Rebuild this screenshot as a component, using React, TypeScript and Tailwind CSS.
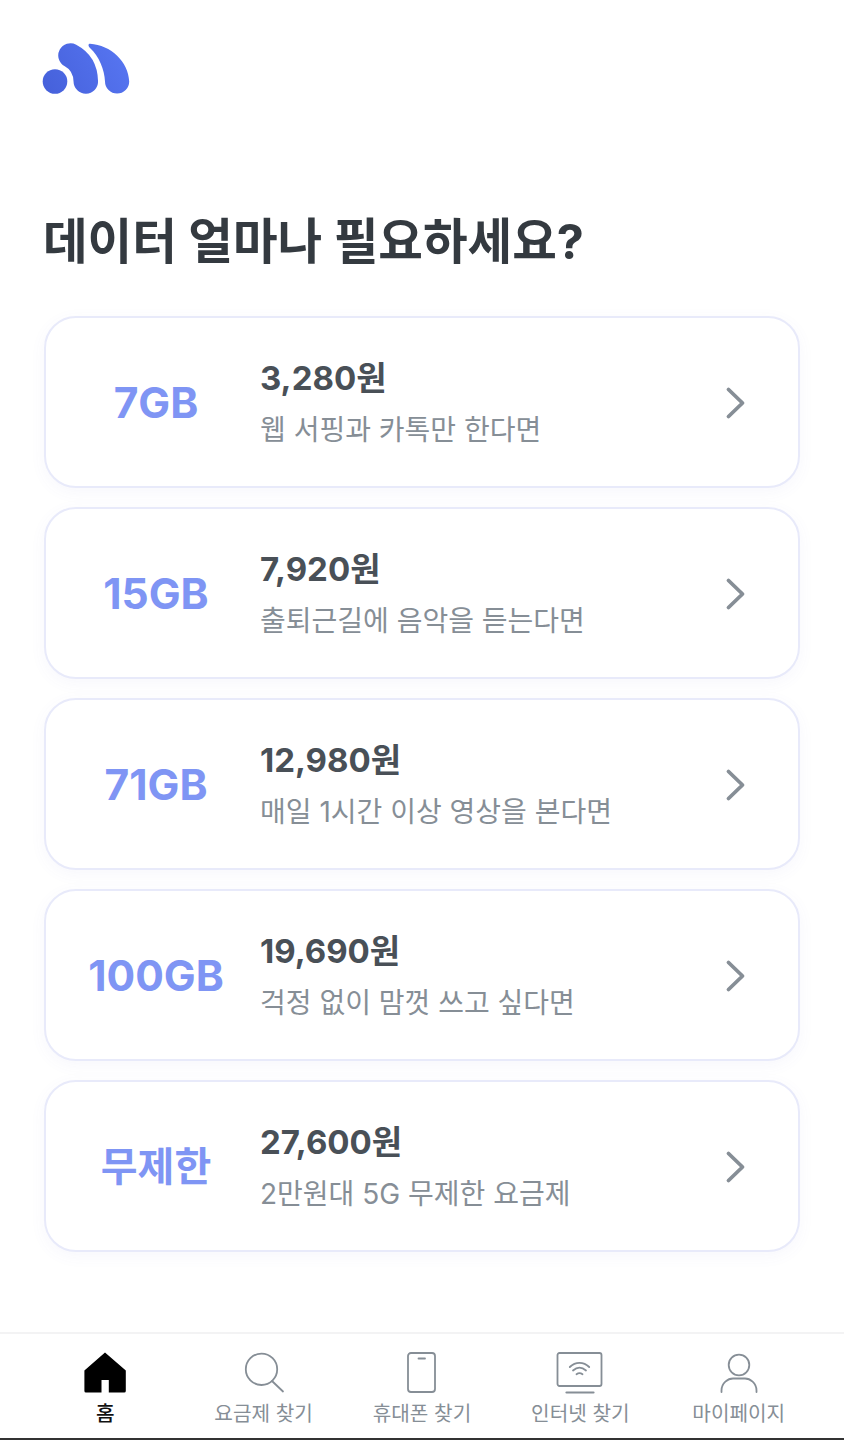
const font = { fontFamily: '"Inter", "Noto Sans CJK KR", sans-serif' };

const plans = [
  { gb: "7GB", price: "3,280원", desc: "웹 서핑과 카톡만 한다면" },
  { gb: "15GB", price: "7,920원", desc: "출퇴근길에 음악을 듣는다면" },
  { gb: "71GB", price: "12,980원", desc: "매일 1시간 이상 영상을 본다면" },
  { gb: "100GB", price: "19,690원", desc: "걱정 없이 맘껏 쓰고 싶다면" },
  { gb: "무제한", price: "27,600원", desc: "2만원대 5G 무제한 요금제", small: true },
];

function Logo() {
  return (
    <svg width="88" height="52" viewBox="42 43 88 52" className="block">
      <defs>
        <linearGradient id="lg2" gradientUnits="userSpaceOnUse" x1="43" y1="94" x2="130" y2="44">
          <stop offset="0" stopColor="#4560da" />
          <stop offset="1" stopColor="#5877f3" />
        </linearGradient>
      </defs>
      <circle cx="55" cy="81.5" r="12.3" fill="url(#lg2)" />
      <path d="M70.5 55.5C79 60 85.5 68 85.8 81.5" fill="none" stroke="url(#lg2)" strokeWidth="24.5" strokeLinecap="round" />
      <path d="M90 43.8C111 45 128.5 62 129.2 81.5A12.1 12.1 0 0 1 105 81.5C104.6 70 99 56 90 48C88 46.2 88 43.8 90 43.8Z" fill="url(#lg2)" />
    </svg>
  );
}

function Chevron() {
  return (
    <svg width="22" height="34" viewBox="0 0 22 34" fill="none" className="mt-[2px] block">
      <path d="M3.5 3.5L17.5 17L3.5 30.5" stroke="#868e96" strokeWidth="3.8" strokeLinecap="round" strokeLinejoin="round" />
    </svg>
  );
}

function HomeIcon() {
  return (
    <svg width="44" height="42" viewBox="0 0 44 42" className="block">
      <path d="M22 .6L42.8 18.5V39A1.6 1.6 0 0 1 41.2 40.6H25.8V28H18.5V40.6H3A1.6 1.6 0 0 1 1.4 39V18.5Z" fill="#000" />
    </svg>
  );
}

function SearchIcon() {
  return (
    <svg width="44" height="42" viewBox="0 0 44 42" fill="none" stroke="#868e96" strokeWidth="1.8" strokeLinecap="round" className="block">
      <circle cx="19.5" cy="17.3" r="15.7" />
      <path d="M30 29L41 39.5" />
    </svg>
  );
}

function PhoneIcon() {
  return (
    <svg width="44" height="42" viewBox="0 0 44 42" fill="none" stroke="#868e96" strokeWidth="1.8" strokeLinecap="round" className="block">
      <rect x="8" y="1" width="27" height="39" rx="3" />
      <path d="M18.5 6.5H25" />
    </svg>
  );
}

function InternetIcon() {
  return (
    <svg width="48" height="42" viewBox="0 0 48 42" fill="none" stroke="#868e96" strokeWidth="1.8" strokeLinecap="round" className="block">
      <rect x="1.5" y="1" width="44" height="33" rx="2" />
      <path d="M10.5 40.5H37.5" strokeWidth="2.2" />
      <path d="M13.8 15C19.5 9.4 27.5 9.4 33.2 15" />
      <path d="M17 18.5C21.2 14.8 25.8 14.8 30 18.5" />
      <path d="M20.5 22.2C22.5 20.8 24.5 20.8 26.5 22.2" />
    </svg>
  );
}

function PersonIcon() {
  return (
    <svg width="44" height="42" viewBox="0 0 44 42" fill="none" stroke="#868e96" strokeWidth="1.8" strokeLinecap="round" className="block">
      <circle cx="22" cy="13" r="10.3" />
      <path d="M4.5 40V38.5C4.5 31 11 26.5 16 26.5H28C33 26.5 39.5 31 39.5 38.5V40" />
    </svg>
  );
}

const tabs = [
  { label: "홈", icon: <HomeIcon />, active: true },
  { label: "요금제 찾기", icon: <SearchIcon /> },
  { label: "휴대폰 찾기", icon: <PhoneIcon /> },
  { label: "인터넷 찾기", icon: <InternetIcon /> },
  { label: "마이페이지", icon: <PersonIcon /> },
];

export default function App() {
  return (
    <div style={font} className="flex h-[1440px] w-[844px] flex-col overflow-hidden bg-white">
      <main className="flex-1 px-[44px]">
        <div className="pt-[43px]">
          <div className="-ml-[2px]">
            <Logo />
          </div>
        </div>
        <h1 className="mt-[115px] -ml-[1px] h-[64px] text-[48.5px] leading-[64px] font-bold whitespace-nowrap text-[#343a40]">
          데이터 얼마나 필요하세요?
        </h1>
        <div className="mt-[42px] flex flex-col gap-[19px]">
          {plans.map((p) => (
            <div
              key={p.gb}
              className="flex h-[172px] items-center rounded-[32px] border-2 border-[#e8eafa] bg-white pr-[51px] shadow-[0_4px_16px_rgba(90,100,200,0.05)]"
            >
              <div className={`-mr-[6px] w-[220px] pt-[2px] text-center leading-none font-bold text-[#7f95f4] ${p.small ? "text-[40px]" : "text-[42.5px]"}`}>{p.gb}</div>
              <div className="flex-1 pt-[2px]">
                <div className="text-[33px] leading-[44px] font-bold text-[#495057]">{p.price}</div>
                <div className="mt-[10px] text-[28px] leading-[40px] text-[#868e96]">{p.desc}</div>
              </div>
              <Chevron />
            </div>
          ))}
        </div>
      </main>
      <nav className="flex h-[108px] border-t-2 border-b-2 border-t-[#f3f3f4] border-b-[#333] px-[26px] pt-[18px]">
        {tabs.map((t) => (
          <div key={t.label} className="flex w-[158.4px] flex-col items-center">
            {t.icon}
            <span className={`mt-[5px] text-[20.2px] leading-[30px] ${t.active ? "font-medium text-[#111]" : "text-[#868e96]"}`}>
              {t.label}
            </span>
          </div>
        ))}
      </nav>
    </div>
  );
}
